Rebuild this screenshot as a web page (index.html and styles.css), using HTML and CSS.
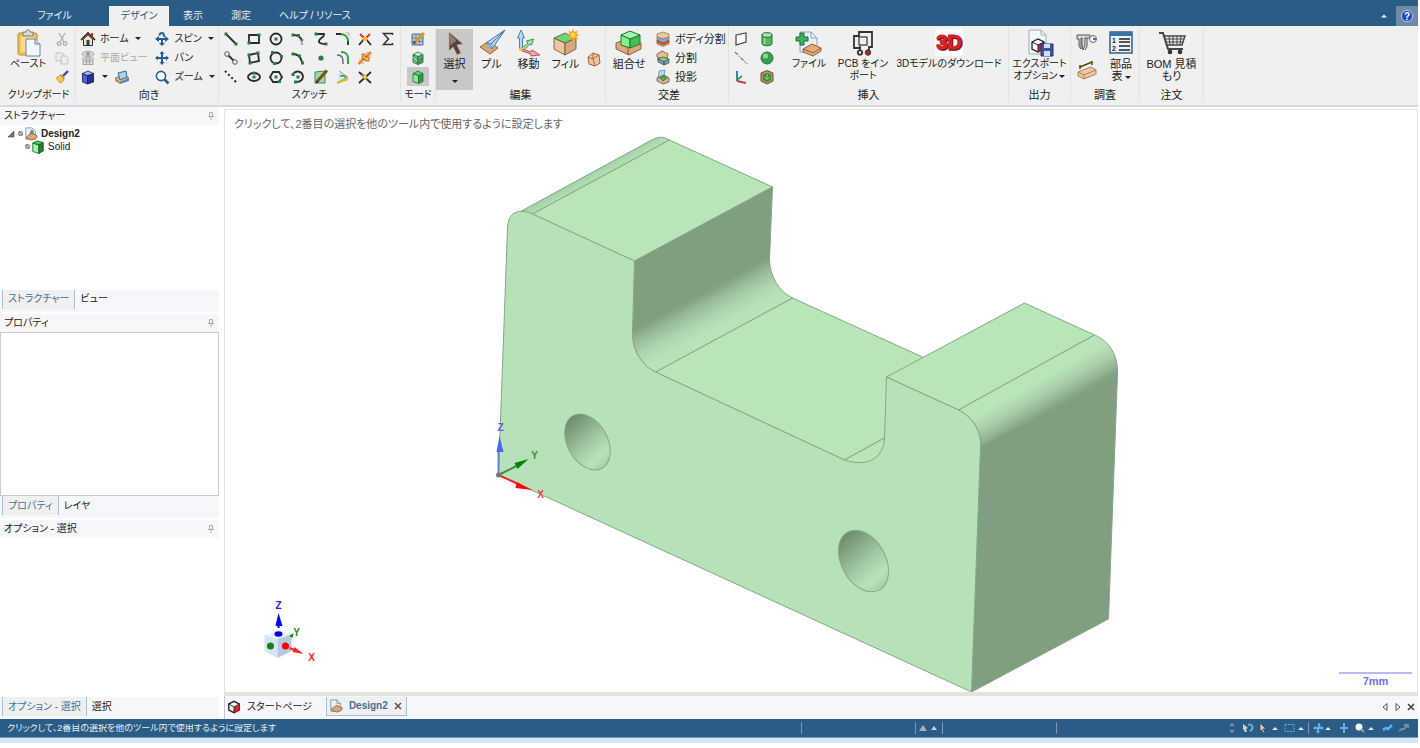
FILE: index.html
```
<!DOCTYPE html>
<html lang="ja">
<head>
    <meta charset="UTF-8">
    <meta name="viewport" content="width=device-width, initial-scale=1.0">
    <title>Design2</title>
    <link rel="stylesheet" href="styles.css">
</head>
<body>
<div class="app">

    <!-- Menu tabs -->
    <header class="menubar">
        <nav class="menu-tabs">
            <button class="menu-tab file-tab">ファイル</button>
            <button class="menu-tab active">デザイン</button>
            <button class="menu-tab">表示</button>
            <button class="menu-tab">測定</button>
            <button class="menu-tab">ヘルプ / リソース</button>
        </nav>
        <button class="collapse-btn" aria-label="リボンを折りたたむ"><svg width="8" height="6" viewBox="0 0 8 6"><path d="M1 4.500 4 1.500l3 3z" fill="#e6eef5"/></svg></button>
        <button class="help-btn" aria-label="ヘルプ"><svg width="14" height="14" viewBox="0 0 14 14"><circle cx="7" cy="7" r="5.600" fill="#2347b8" stroke="#b9c8ea"/><text x="7" y="10.500" text-anchor="middle" font-size="10" font-weight="bold" fill="#fff">?</text></svg></button>
    </header>

    <!-- Ribbon -->
    <div class="ribbon">
        <section class="group g-clipboard">
            <div class="group-body">
                <button class="big">
                    <svg width="28" height="28" viewBox="0 0 28 28"><rect x="4" y="4" width="19" height="22" rx="2" fill="#efc25c" stroke="#b98a33"/><rect x="7" y="7" width="13" height="16" fill="#f9dc90"/><path d="M9 3h3c0-3 4-3 4 0h3v4H9z" fill="#d9dbd6" stroke="#777b70"/><path d="M12 10h9l5 5v12H12z" fill="#f3f7fd" stroke="#6d829c"/><path d="M21 10v5h5" fill="#cbdcee" stroke="#6d829c"/></svg>
                    <span>ペースト</span>
                </button>
                <div class="stack">
                    <button class="icon-btn" aria-label="切り取り"><svg class="ico" viewBox="0 0 16 16"><g fill="none" stroke="#b4b4b4" stroke-width="1.4"><path d="M5 2l5 9M11 2L6 11"/><circle cx="5" cy="12.500" r="1.800"/><circle cx="11" cy="12.500" r="1.800"/></g></svg></button>
                    <button class="icon-btn" aria-label="コピー"><svg class="ico" viewBox="0 0 16 16"><g fill="#ececec" stroke="#c2c2c2"><path d="M2 3h6l2 2v6H2z"/><path d="M7 6h5l2 2v6H7z"/></g></svg></button>
                    <button class="icon-btn" aria-label="書式コピー"><svg class="ico" viewBox="0 0 16 16"><path d="M14 2 9 7" stroke="#4a3fa0" stroke-width="2.4"/><path d="M7 5l4 4-1 1-4-4z" fill="#999"/><path d="M6 6l4 4c-1 3-2 4-4 4L2 9c1-1 3-1 4-3z" fill="#f1cb45" stroke="#a77d1c" stroke-width=".6"/></svg></button>
                </div>
            </div>
            <h2 class="kana">クリップボード</h2>
        </section>

        <section class="group g-orient">
            <div class="group-body">
                <div class="stack">
                    <button class="row-btn"><svg class="ico" viewBox="0 0 16 16"><path d="M3.500 8v6.500h9V8L8 4z" fill="#f3e7b8" stroke="#333"/><path d="M1 9 8 2l7 7" fill="none" stroke="#3b1c1c" stroke-width="1.600"/><path d="M11 2h2v4l-2-2z" fill="#a33"/><rect x="6.500" y="9" width="3" height="5.500" fill="#25407a"/></svg>ホーム<i class="caret"></i></button>
                    <button class="row-btn" disabled><svg class="ico" viewBox="0 0 16 16"><g fill="#ddd" stroke="#a5a5a5"><ellipse cx="8" cy="4" rx="6" ry="2.600"/><circle cx="8" cy="4" r="1.600" fill="#999"/><rect x="3" y="8" width="10" height="6.500"/><path d="M3 11h10M6.500 8v6.500M9.500 8v6.500"/></g></svg>平面ビュー</button>
                    <div class="pair">
                        <button class="row-btn" aria-label="ビュー"><svg class="ico" viewBox="0 0 16 16"><g stroke="#171763" stroke-width=".8"><path d="M2.500 4.500 7.500 6.500v8.500L2.500 13z" fill="#5561bd"/><path d="M7.500 6.500 13.500 4.500V13L7.500 15z" fill="#262f93"/><path d="M2.500 4.500 8 2l5.500 2.500-6 2z" fill="#a9b2ea"/></g></svg><i class="caret"></i></button>
                        <button class="icon-btn" aria-label="スナップビュー"><svg class="ico" viewBox="0 0 16 16"><path d="M1 9l9-3 5 3-9 5z" fill="#e2b583" stroke="#7a5b3b" stroke-width=".7"/><path d="M1 9v3l5 3v-2z" fill="#b98a5c"/><path d="M4 4l8-2 1 6-7 3z" fill="#a8d1ec" stroke="#34678e"/><path d="M6 13l9-4v3l-9 3z" fill="#5688b3"/></svg></button>
                    </div>
                </div>
                <div class="stack">
                    <button class="row-btn"><svg class="ico" viewBox="0 0 16 16"><g fill="#255f90"><path d="M1 8l4-3v2h6V5l4 3-4 3V9H5v2z"/><path d="M8 1c3 0 3 3 3 5H9c0-2 0-3-1-3S6.500 4 6 5L4.500 4C5 2 6 1 8 1z"/><path d="M7 9h2v3h2l-3 3-3-3h2z"/></g></svg>スピン<i class="caret"></i></button>
                    <button class="row-btn"><svg class="ico" viewBox="0 0 16 16"><path d="M8 1l2.500 3H9v3h3V5.500L15 8l-3 2.500V9H9v3h1.500L8 15l-2.500-3H7V9H4v1.500L1 8l3-2.500V7h3V4H5.500z" fill="#255f90"/></svg>パン</button>
                    <button class="row-btn"><svg class="ico" viewBox="0 0 16 16"><circle cx="7" cy="7" r="4.600" fill="#fafdff" stroke="#255f90" stroke-width="1.600"/><path d="M10.500 10.500 14.500 14.500" stroke="#255f90" stroke-width="2.600"/></svg>ズーム<i class="caret"></i></button>
                </div>
            </div>
            <h2>向き</h2>
        </section>

        <section class="group g-sketch">
            <div class="group-body sketch-grid">
                <button class="icon-btn" aria-label="線"><svg class="ico" viewBox="0 0 16 16"><path class="ln" d="M3 3l10 10"/><path class="pt" d="M1.500 1.500h3v3h-3zM11.500 11.500h3v3h-3z"/></svg></button>
                <button class="icon-btn" aria-label="長方形"><svg class="ico" viewBox="0 0 16 16"><path class="ln" d="M3 4h10v8H3z"/><path class="pt" d="M1.500 10.500h3v3h-3zM11.500 2.500h3v3h-3z"/></svg></button>
                <button class="icon-btn" aria-label="円"><svg class="ico" viewBox="0 0 16 16"><circle class="ln" cx="8" cy="8" r="5.500"/><path class="pt" d="M6.500 6.500h3v3h-3z"/></svg></button>
                <button class="icon-btn" aria-label="接線円弧"><svg class="ico" viewBox="0 0 16 16"><path class="ln" d="M3 4c5 0 8 2 9 6"/><path class="pt" d="M1.500 2.500h3v3h-3zM7 3h3v3H7z"/><path d="M10 8l3 6M13.500 8l-2.500 6" stroke="#999"/></svg></button>
                <button class="icon-btn" aria-label="スプライン"><svg class="ico" viewBox="0 0 16 16"><path class="ln" d="M3 3h8c1 4-6 4-5 8 1 2 4 2 7 2"/><path class="pt" d="M1.500 1.500h3v3h-3zM11.500 11.500h3v3h-3z"/></svg></button>
                <button class="icon-btn" aria-label="丸み"><svg class="ico" viewBox="0 0 16 16"><path d="M5 3c5 0 8 3 8 7" fill="none" stroke="#27a338" stroke-width="2"/><path class="ln" d="M1 3h5M13 10v4"/><path d="M11 2h3v3" fill="none" stroke="#d99"/></svg></button>
                <button class="icon-btn" aria-label="トリム"><svg class="ico" viewBox="0 0 16 16"><path class="ln" d="M2 14l6-7 6 7"/><path d="M3 3l5 5 5-5" fill="none" stroke="#d83a23" stroke-width="2"/><path d="M6 6h4v4H6z" fill="#f4b72d"/></svg></button>
                <button class="icon-btn" aria-label="数式"><svg class="ico" viewBox="0 0 16 16"><path d="M12.500 4V2.500H3.500L8.500 8l-5 5.500h9V12" fill="none" stroke="#333" stroke-width="1.500"/></svg></button>

                <button class="icon-btn" aria-label="接線"><svg class="ico" viewBox="0 0 16 16"><path class="ln" d="M4 4l8 8"/><circle cx="4" cy="4" r="2.300" fill="#eee" stroke="#555"/><circle cx="12" cy="12" r="2.300" fill="#eee" stroke="#555"/></svg></button>
                <button class="icon-btn" aria-label="3点長方形"><svg class="ico" viewBox="0 0 16 16"><path class="ln" d="M3 5l9-2 1 8-9 2z"/><path class="pt" d="M1.500 3.500h3v3h-3zM10.500 1.500h3v3h-3zM2.500 11.500h3v3h-3z"/></svg></button>
                <button class="icon-btn" aria-label="3点円"><svg class="ico" viewBox="0 0 16 16"><circle class="ln" cx="8" cy="8" r="5.500"/><path class="pt" d="M3 1h3v3H3zM12 5h3v3h-3zM5 12h3v3H5z"/></svg></button>
                <button class="icon-btn" aria-label="円弧"><svg class="ico" viewBox="0 0 16 16"><path class="ln" d="M3 4c5 0 8 4 9 8"/><path class="pt" d="M1.500 2.500h3v3h-3zM8 4.500h3v3H8zM11 11.500h3v3h-3z"/></svg></button>
                <button class="icon-btn" aria-label="点"><svg class="ico" viewBox="0 0 16 16"><circle cx="8" cy="8" r="2.600" fill="#287f42"/></svg></button>
                <button class="icon-btn" aria-label="オフセット"><svg class="ico" viewBox="0 0 16 16"><path d="M6 2c5 0 7 3 7 6v6" fill="none" stroke="#2ba63d" stroke-width="2"/><path d="M2 5c5 0 6 2 6 9" fill="none" stroke="#666" stroke-width="1.400"/></svg></button>
                <button class="icon-btn" aria-label="分割線"><svg class="ico" viewBox="0 0 16 16"><path d="M1.500 14 14 2" stroke="#df7927" stroke-width="2"/><path d="M5 4h3v3h4v4H8V9H5z" fill="#f4c52d" stroke="#bd442b" stroke-width=".8"/><path d="M3 9v4h4M9 3h4v4" fill="none" stroke="#e89040"/></svg></button>
                <span></span>

                <button class="icon-btn" aria-label="補助線"><svg class="ico" viewBox="0 0 16 16"><path d="M2 2l12 12" stroke="#222" stroke-width="2" stroke-dasharray="2 2.500"/></svg></button>
                <button class="icon-btn" aria-label="楕円"><svg class="ico" viewBox="0 0 16 16"><ellipse class="ln" cx="8" cy="8" rx="6" ry="4"/><path class="pt" d="M6.500 6.500h3v3h-3zM7 2.500h2v3H7z"/></svg></button>
                <button class="icon-btn" aria-label="多角形"><svg class="ico" viewBox="0 0 16 16"><path class="ln" d="M5 3h6l3 5-3 5H5L2 8z"/><path class="pt" d="M6.500 6.500h3v3h-3zM10 11h3v3h-3z"/></svg></button>
                <button class="icon-btn" aria-label="スイープ円弧"><svg class="ico" viewBox="0 0 16 16"><path class="ln" d="M3 5c3-4 9-3 10 2 0 4-3 6-7 6"/><path class="pt" d="M1.500 4h3v3h-3zM6.500 6.500h3v3h-3zM4 11.500h3v3H4z"/></svg></button>
                <button class="icon-btn" aria-label="スケッチ編集"><svg class="ico" viewBox="0 0 16 16"><path d="M2 3l10-1v12H2z" fill="#a5d7aa" stroke="#438a50"/><path d="M14 1.500 4.500 12" stroke="#745423" stroke-width="3"/><path d="M2.500 14.500l1-3.500 2.500 2z" fill="#222"/></svg></button>
                <button class="icon-btn" aria-label="投影"><svg class="ico" viewBox="0 0 16 16"><path d="M4 2l9 6-10 5" fill="#dce8f2" stroke="#999"/><path d="M5 7c3-1 5 0 6 2" fill="none" stroke="#2ba63d" stroke-width="1.600"/><path d="M2 14l11-4" stroke="#e0b820" stroke-width="2"/></svg></button>
                <button class="icon-btn" aria-label="コーナー"><svg class="ico" viewBox="0 0 16 16"><path class="ln" d="M2 14 14 3M2 3l12 11"/><path d="M5 5l5 5" stroke="#e86a22" stroke-width="2.400"/><path d="M6.500 6.500h3v3h-3z" fill="#ee3"/></svg></button>
            </div>
            <h2 class="kana">スケッチ</h2>
        </section>

        <section class="group g-mode">
            <div class="group-body stack">
                <button class="icon-btn" aria-label="スケッチモード"><svg class="ico" viewBox="0 0 16 16"><path d="M2 3h11v11H2z" fill="#bac9df" stroke="#56698a"/><path d="M2 7h11M2 10.500h11M6 3v11M9.500 3v11" stroke="#56698a" stroke-width=".7"/><path d="M14 2 5 11" stroke="#cf9d2a" stroke-width="3"/><path d="M3 13l1-3 2 2z" fill="#222"/></svg></button>
                <button class="icon-btn" aria-label="断面モード"><svg class="ico" viewBox="0 0 16 16"><g stroke="#246b35" stroke-width=".8"><path d="M3 4.500 8 6.500v8l-5-2z" fill="#8fd39b"/><path d="M8 6.500 13 4.500v8l-5 2z" fill="#56a866"/><path d="M3 4.500 8 2l5 2.500-5 2z" fill="#c6efcb"/><path d="M3 9l5 5M3 5l5 5M9 13l4-6"/></g></svg></button>
                <button class="icon-btn pressed" aria-label="3Dモード"><svg class="ico" viewBox="0 0 16 16"><g stroke="#1d6e30" stroke-width=".8"><path d="M3 4.500 8.500 6.500v8L3 12.500z" fill="#8be79a"/><path d="M8.500 6.500 13 4.500v8l-4.500 2z" fill="#2d9b46"/><path d="M3 4.500 8 2l5 2.500-4.500 2z" fill="#5ed175"/></g></svg></button>
            </div>
            <h2 class="kana">モード</h2>
        </section>

        <section class="group g-edit">
            <div class="group-body">
                <button class="big pressed">
                    <svg width="28" height="28" viewBox="0 0 28 28"><path d="M8 3l14 12-6 1 4 8-4 2-4-8-4 4z" fill="#51443e" stroke="#d4aa8f" stroke-width=".8"/><path d="M8.500 4.500l7 7-6 5z" fill="#8b7c74"/></svg>
                    <span>選択</span><i class="caret"></i>
                </button>
                <button class="big">
                    <svg width="28" height="28" viewBox="0 0 28 28"><path d="M2 18l9-6 9 7-8 6z" fill="#dda66c" stroke="#93653a"/><path d="M27 1 8 14l5 1 1 5z" fill="#b7d7f1" stroke="#4677a5"/><path d="M27 1 13 15" stroke="#4677a5"/><path d="M12 15l-4 4 4 1 3-3z" fill="#7fb4e2"/></svg>
                    <span>プル</span>
                </button>
                <button class="big">
                    <svg width="28" height="28" viewBox="0 0 28 28"><path d="M6 1l3.500 8H7.500v11h-3V9H2.500z" fill="#b9d9ef" stroke="#4d81a8"/><path d="M7 19l6-5-1.500-2 7-2-2 6-1.500-1-6 6z" fill="#a9e3b2" stroke="#3b9150"/><path d="M7 20l9 3 1-2 8 5-9 1v-2l-9-3z" fill="#efaaaa" stroke="#bd5252"/><circle cx="6" cy="20" r="2" fill="#e3c44c"/></svg>
                    <span>移動</span>
                </button>
                <button class="big">
                    <svg width="28" height="28" viewBox="0 0 28 28"><g stroke="#6b4d32" stroke-width=".8"><path d="M2 9l11 5v12L2 20z" fill="#f0c59c"/><path d="M13 14 24 9v11l-11 6z" fill="#d9a878"/><path d="M2 9l11-5 11 5-11 5z" fill="#66d878"/></g><path d="M21 0l1.500 3 3-1.500L24.500 5l3 1-3 1.500 1 3.500-3-1.500L21 12.500 19.500 9.500l-3 1.500 1-3.500-3-1.500 3-1-1-3.500 3 1.500z" fill="#f3a51c"/><circle cx="21" cy="6" r="2.500" fill="#ffd44d"/></svg>
                    <span>フィル</span>
                </button>
                <button class="icon-btn combine" aria-label="ブレンド"><svg class="ico" viewBox="0 0 16 16"><path d="M2 6l5-4 6 2 1 8-5 3-6-2z" fill="#f0c39d" stroke="#98683f"/><path d="M2 6l5 2 6-4M7 8l2 7M7 2v6" fill="none" stroke="#98683f" stroke-width=".9"/></svg></button>
            </div>
            <h2>編集</h2>
        </section>

        <section class="group g-cross">
            <div class="group-body">
                <button class="big">
                    <svg width="28" height="28" viewBox="0 0 28 28"><g stroke="#6b4d32" stroke-width=".8"><path d="M1 14l8-3 17 3v6l-12 6L1 20z" fill="#dca77a"/><path d="M13 18v8"/></g><g stroke="#22762e"><path d="M6 6l9 4v9l-9-3z" fill="#84ed92"/><path d="M15 10l10-4v9l-10 4z" fill="#46bc59"/><path d="M6 6l9-4 10 4-10 4z" fill="#a0f4ab"/></g></svg>
                    <span>組合せ</span>
                </button>
                <div class="stack">
                    <button class="row-btn"><svg class="ico" viewBox="0 0 16 16"><g stroke="#8a5a35" stroke-width=".6"><path d="M2 9l6 2 6-2v4l-6 2.500L2 13z" fill="#e4ae7f"/><path d="M2 9l6 2 6-2v2.500L8 14l-6-2.500z" fill="#d84b3f"/><path d="M2 6l6 2 6-2v3l-6 2.500L2 9z" fill="#79b2dc"/><path d="M2 3l6-2 6 2v3L8 8 2 6z" fill="#eac6a4"/></g></svg>ボディ分割</button>
                    <button class="row-btn"><svg class="ico" viewBox="0 0 16 16"><g stroke="#4f4636" stroke-width=".7"><path d="M2 4l5-3 6 3-1 4-5 1-5-2z" fill="#e8bd8c"/><path d="M2 9l6-2 6 2-5 3z" fill="#7fcc8b"/><path d="M3 9l6 3v3l-6-3zM9 12l5-3v4l-5 2z" fill="#79a4c4"/></g></svg>分割</button>
                    <button class="row-btn"><svg class="ico" viewBox="0 0 16 16"><path d="M4 2l6-1-1 7-6 3z" fill="#b6d9ec" stroke="#5387a5" stroke-width=".7"/><path d="M2 9l7-3 5 3v4l-6 2-6-3z" fill="#dbb391" stroke="#4f4636" stroke-width=".7"/><path d="M5 9l4-2 3 2-4 3z" fill="#48b75d" stroke="#285e35" stroke-width=".7"/></svg>投影</button>
                </div>
            </div>
            <h2>交差</h2>
        </section>

        <section class="group g-insert">
            <div class="group-body">
                <div class="create-grid">
                    <button class="icon-btn" aria-label="平面"><svg class="ico" viewBox="0 0 16 16"><path d="M3 4l10-2v9L3 14z" fill="#fafafa" stroke="#444" stroke-width="1.200"/></svg></button>
                    <button class="icon-btn" aria-label="円柱"><svg class="ico" viewBox="0 0 16 16"><path d="M3 4v8.500c0 3 10 3 10 0V4z" fill="#50b664" stroke="#286a37"/><ellipse cx="8" cy="4" rx="5" ry="2.300" fill="#a5e6b0" stroke="#286a37"/><path d="M5.500 7v6" stroke="#9de0a9" stroke-width="1.500"/></svg></button>
                    <button class="icon-btn" aria-label="軸"><svg class="ico" viewBox="0 0 16 16"><path d="M2 2l12 12" stroke="#777" stroke-width="1.300" stroke-dasharray="4 1.500 1 1.500"/></svg></button>
                    <button class="icon-btn" aria-label="球"><svg class="ico" viewBox="0 0 16 16"><circle cx="8" cy="8" r="6" fill="#3b9d50" stroke="#28743a"/><circle cx="6.500" cy="6" r="2.500" fill="#8bd69a"/></svg></button>
                    <button class="icon-btn" aria-label="原点"><svg class="ico" viewBox="0 0 16 16"><path d="M4 2v10" stroke="#3d83b0" stroke-width="2"/><path d="M4 11l5-4" stroke="#3a9f52" stroke-width="1.800"/><path d="M4 12l9 2" stroke="#c43f3f" stroke-width="1.800"/></svg></button>
                    <button class="icon-btn" aria-label="シェル"><svg class="ico" viewBox="0 0 16 16"><path d="M2 4l6-2.500L14 4v8l-6 3-6-3z" fill="#c4915b" stroke="#6b4d32"/><path d="M4 5l4-1 4 1v6l-4 2-4-2z" fill="#358f3e"/><path d="M8 5v5M5.500 8 8 10.500 10.500 8" fill="none" stroke="#8fe07a"/></svg></button>
                </div>
                <button class="big">
                    <svg width="28" height="28" viewBox="0 0 28 28"><path d="M5 3h11l6 6v14H5z" fill="#e6eef6" stroke="#93a5b5"/><path d="M16 3v6h6" fill="none" stroke="#93a5b5"/><path d="M5 4h4v4h4v4H9v4H5v-4H1V8h4z" fill="#43ad60" stroke="#1f6f38"/><path d="M8 20l9-5 9 4v3l-8 5-10-4z" fill="#e2ab78" stroke="#8e6135"/><path d="M8 20l10 4 8-5" fill="none" stroke="#8e6135"/></svg>
                    <span>ファイル</span>
                </button>
                <button class="big pcb">
                    <svg width="28" height="28" viewBox="0 0 28 28"><g fill="none" stroke="#333" stroke-width="1.800"><path d="M11 19H5V7h5V3h13v15h-3v3M11 17v4"/><rect x="10" y="8" width="8" height="8" stroke-width="1.200"/><circle cx="11" cy="23.500" r="2.200"/></g><circle cx="19" cy="23.500" r="2.700" fill="#b8222a" stroke="#333"/></svg>
                    <span>PCB をイン<br>ポート</span>
                </button>
                <button class="big model3d">
                    <svg width="28" height="28" viewBox="0 0 28 28"><rect width="28" height="27" rx="4" fill="#fcfcfc"/><g font-size="20" font-weight="bold" text-anchor="middle"><text x="15" y="21" fill="#6b0e12" stroke="#6b0e12" stroke-width="1.500">3D</text><text x="14" y="20" fill="#d2232a" stroke="#d2232a">3D</text></g></svg>
                    <span>3Dモデルのダウンロード</span>
                </button>
            </div>
            <h2>挿入</h2>
        </section>

        <section class="group g-export">
            <div class="group-body">
                <button class="big">
                    <svg width="28" height="28" viewBox="0 0 28 28"><path d="M3 1h12l5 5v19H3z" fill="#f3f7fb" stroke="#9aacbd"/><path d="M15 1v5h5" fill="none" stroke="#9aacbd"/><path d="M6 13l6-3 6 3v7l-6 3-6-3z" fill="#fff" stroke="#222" stroke-width="1.300"/><path d="M12 16l6-3v7l-6 3z" fill="#d4202a"/><path d="M6 13l6 3 6-3M12 16v7" fill="none" stroke="#222"/><path d="M15 15h12v12H15z" fill="#42549f" stroke="#25326e"/><path d="M18 15h6v4h-6zM18 22h6v5h-6z" fill="#d7def0"/></svg>
                    <span>エクスポート<br>オプション<i class="caret"></i></span>
                </button>
            </div>
            <h2>出力</h2>
        </section>

        <section class="group g-survey">
            <div class="group-body">
                <div class="survey-col">
                    <button class="icon-btn" aria-label="測定"><svg width="22" height="22" viewBox="0 0 22 22"><path d="M1 3h13v3H9v7l-2 5-1-5V6H5v11l-2-3V7H1zM11 6v8l-2 4" fill="#d9d9d9" stroke="#555"/><circle cx="17" cy="7" r="3.500" fill="#edf3ff" stroke="#666"/><path d="M17 7h3" stroke="#4366d8" stroke-width="2"/></svg></button>
                    <button class="icon-btn" aria-label="質量特性"><svg width="22" height="22" viewBox="0 0 22 22"><path d="M2 13l13-5 5 3v4L8 20l-6-3z" fill="#efc7a4" stroke="#ac8059"/><path d="M2 13l6 3 12-5M8 16v4" fill="none" stroke="#ac8059"/><path d="M4 8l12-5M4 6v4M16 2v4" stroke="#584516" stroke-width="1.500"/></svg></button>
                </div>
                <button class="big">
                    <svg width="28" height="28" viewBox="0 0 28 28"><rect x="3" y="3" width="22" height="21" fill="#edf3f8" stroke="#335f8a" stroke-width="1.500"/><path d="M3 3h22v4H3z" fill="#3a72a8"/><path d="M12 10h11M12 13h11M12 17h11M12 21h11" stroke="#222" stroke-width="1.500"/><g font-size="7" font-weight="bold" fill="#222"><text x="5" y="14">1</text><text x="5" y="22">2</text></g></svg>
                    <span>部品<br>表<i class="caret"></i></span>
                </button>
            </div>
            <h2>調査</h2>
        </section>

        <section class="group g-order">
            <div class="group-body">
                <button class="big">
                    <svg width="28" height="28" viewBox="0 0 28 28"><g fill="none" stroke="#444"><path d="M1 4h4l5 16h15" stroke-width="2"/><path d="M6 7h21l-3 9H9" stroke-width="1.400"/><path d="M7 10h19M8 13h17M11 7l1 9M15 7v9M19 7v9M23 7l-1 9"/></g><circle cx="12" cy="23" r="2.300" fill="#333"/><circle cx="22" cy="23" r="2.300" fill="#333"/></svg>
                    <span>BOM 見積<br>もり</span>
                </button>
            </div>
            <h2>注文</h2>
        </section>
    </div>

    <!-- Workspace -->
    <div class="workspace">
        <aside class="side">
            <section class="panel">
                <div class="panel-head"><h3>ストラクチャー</h3><button class="pin" aria-label="固定"><svg width="8" height="8" viewBox="0 0 8 8"><path d="M2.500 .5h3v4h-3zM1 4.500h6M4 4.500V8" fill="none" stroke="#aaa"/></svg></button></div>
                <div class="panel-body tree">
                    <div class="node root">
                        <svg width="8" height="8" viewBox="0 0 8 8"><path d="M7 1v6H1z" fill="#777" stroke="#444" stroke-width=".6"/></svg>
                        <input type="checkbox" id="n-design" checked>
                        <label for="n-design"><svg width="14" height="14" viewBox="0 0 16 16"><path d="M2 1h7l4 4v9H2z" fill="#eaf0f6" stroke="#8296a9"/><path d="M8 3l3 1v5H6z" fill="#5f88ad"/><path d="M3 11l6-4 6 3v2l-6 3-6-2z" fill="#dfa76e" stroke="#815a35" stroke-width=".8"/></svg>Design2</label>
                    </div>
                    <div class="node child">
                        <input type="checkbox" id="n-solid" checked>
                        <label for="n-solid"><svg width="14" height="14" viewBox="0 0 16 16"><g stroke="#14561f" stroke-width=".9"><path d="M2 3.500 9 5.500v10L2 13z" fill="#a0f5a8"/><path d="M9 5.500 14 3v9.500l-5 3z" fill="#237f35"/><path d="M2 3.500 7 1l7 2-5 2.500z" fill="#46c45d"/></g></svg>Solid</label>
                    </div>
                </div>
                <div class="panel-tabs"><button class="active">ストラクチャー</button><button>ビュー</button></div>
            </section>
            <section class="panel">
                <div class="panel-head"><h3>プロパティ</h3><button class="pin" aria-label="固定"><svg width="8" height="8" viewBox="0 0 8 8"><path d="M2.500 .5h3v4h-3zM1 4.500h6M4 4.500V8" fill="none" stroke="#aaa"/></svg></button></div>
                <div class="panel-body boxed"></div>
                <div class="panel-tabs"><button class="active">プロパティ</button><button>レイヤ</button></div>
            </section>
            <section class="panel options">
                <div class="panel-head"><h3>オプション - 選択</h3><button class="pin" aria-label="固定"><svg width="8" height="8" viewBox="0 0 8 8"><path d="M2.500 .5h3v4h-3zM1 4.500h6M4 4.500V8" fill="none" stroke="#aaa"/></svg></button></div>
                <div class="panel-body"></div>
                <div class="panel-tabs"><button class="active">オプション - 選択</button><button>選択</button></div>
            </section>
        </aside>

        <main class="document">
            <div class="viewport">
                <p class="hint">クリックして、2番目の選択を他のツール内で使用するように設定します</p>
                <svg class="model" viewBox="225 110 1191 582">
                    <defs>
                        <linearGradient id="fillet" gradientUnits="userSpaceOnUse" x1="700" y1="295" x2="722" y2="336"><stop offset="0" stop-color="#819e81"/><stop offset=".2" stop-color="#98b899"/><stop offset=".5" stop-color="#add3af"/><stop offset=".8" stop-color="#b8e3ba"/></linearGradient>
                        <linearGradient id="round" gradientUnits="userSpaceOnUse" x1="1026" y1="372" x2="1048" y2="411"><stop offset=".3" stop-color="#b9e5bb"/><stop offset=".6" stop-color="#accfad"/><stop offset=".85" stop-color="#95b496"/><stop offset="1" stop-color="#829f82"/></linearGradient>
                        <linearGradient id="backround" gradientUnits="userSpaceOnUse" x1="590" y1="174" x2="595" y2="183"><stop offset="0" stop-color="#a5d2a8"/><stop offset="1" stop-color="#b9e5bb"/></linearGradient>
                        <linearGradient id="bore" x1="0" y1=".5" x2="1" y2=".35"><stop offset="0" stop-color="#6e8a6f"/><stop offset=".5" stop-color="#a1c6a3"/><stop offset=".8" stop-color="#b9e3bb"/><stop offset="1" stop-color="#a5cca7"/></linearGradient>
                    </defs>
                    <g class="edges">
                        <path fill="url(#backround)" d="M519 212 653 139Q661 135 669 140L532 214z"/>
                        <path class="top" d="M532 214 669 140 772 187 634 261z"/>
                        <path class="shade" d="M634 261 772 187 769 259 632 332z"/>
                        <path class="top" d="M655 372 792 298 922 357 960 400 884 438 844 460z"/>
                        <path fill="url(#fillet)" d="M632 332 769 259C769 276 779 292 792 298L655 372C642 366 631 350 632 332z"/>
                        <path class="top" d="M844 460 884 438 900 470 858 470z"/>
                        <path class="top" d="M886 377 1024 303 1094 335 958 410z"/>
                        <path fill="url(#round)" d="M958 410 1094 335C1109 341 1118 356 1117 374L980 447C981 431 972 417 958 410z"/>
                        <path class="shade" d="M980 447 1117 374 1108 619 971 692z"/>
                        <path class="front" d="M498 475 507 229C507 214 516 207 532 214L634 261 632 332C631 350 642 366 655 372L844 460C865 467 883 460 884 438L886 377 958 410C972 417 981 431 980 447L971 692z"/>
                    </g>
                    <g stroke="#83a885" fill="url(#bore)">
                        <ellipse cx="587" cy="442" rx="30" ry="20" transform="rotate(61 587 442)"/>
                        <ellipse cx="863" cy="561" rx="33" ry="22" transform="rotate(61 863 561)"/>
                    </g>
                    <!-- Origin axes -->
                    <g class="axis-text">
                        <path d="M498 475V448" stroke="#6289cf" stroke-width="2"/><path d="M499 436l4 16h-7z" fill="#4a66ee"/>
                        <path d="M498 475l20-10" stroke="#3b8d3f" stroke-width="2"/><path d="M528 459l-14 4 3 6z" fill="#078309"/>
                        <path d="M498 475l22 10" stroke="#f02020" stroke-width="2"/><path d="M532 490l-16-8-1 6z" fill="#f00"/>
                        <circle cx="498" cy="475" r="2.500" fill="#777"/>
                        <text x="500" y="431" fill="#5468e4">Z</text><text x="534" y="459" fill="#359040">Y</text><text x="540" y="498" fill="#f04040">X</text>
                    </g>
                    <!-- View orientation cube -->
                    <g class="axis-text">
                        <path d="M264 635l13-5 14 4-14 5z" fill="#eaf3fc"/><path d="M264 635l13 4v19l-13-7z" fill="#d5e4f5"/><path d="M277 639l14-5v17l-14 7z" fill="#b5c9e3"/>
                        <path d="M278 628v-7" stroke="#00f" stroke-width="2"/><path d="M278 613l4 13h-7z" fill="#00f"/><ellipse cx="278" cy="634" rx="4" ry="2.800" fill="#0000d8"/>
                        <circle cx="270" cy="646" r="3.500" fill="#0a8713"/><circle cx="285" cy="646" r="3.500" fill="#f00"/>
                        <path d="M289 648l5 2" stroke="#f22" stroke-width="2"/><path d="M303 654l-9-7-2 5z" fill="#f22"/>
                        <path d="M289 636l4-3-1 5z" fill="#078309"/>
                        <text x="278" y="609" fill="#22f">Z</text><text x="296" y="636" fill="#168c1b">Y</text><text x="311" y="661" fill="#f22">X</text>
                    </g>
                </svg>
                <div class="scale">7mm</div>
            </div>
            <div class="doc-tabs">
                <button class="doc-tab"><svg width="14" height="14" viewBox="0 0 16 16"><path d="M2 4.500 8 1.500l6 3v7l-6 3-6-3z" fill="#eee" stroke="#222" stroke-width="1.500"/><path d="M8 8l6-3v6.500l-6 3z" fill="#d8212a"/><path d="M2 4.500 8 8l6-3.500M8 8v6.500" fill="none" stroke="#222"/></svg>スタートページ</button>
                <button class="doc-tab active"><svg width="14" height="14" viewBox="0 0 16 16"><path d="M2 1h7l4 4v9H2z" fill="#eaf0f6" stroke="#8296a9"/><path d="M9 1v4h4" fill="none" stroke="#8296a9"/><path d="M3 11l6-4 6 3v2l-6 3-6-2z" fill="#dfa76e" stroke="#815a35" stroke-width=".8"/></svg>Design2<svg width="8" height="8" viewBox="0 0 8 8"><path d="M1 1l6 6M7 1 1 7" stroke="#555" stroke-width="1.600"/></svg></button>
                <div class="doc-nav">
                    <button aria-label="前へ"><svg width="8" height="8" viewBox="0 0 8 8"><path d="M6 .5v7L2 4z" fill="none" stroke="#555"/></svg></button>
                    <button aria-label="次へ"><svg width="8" height="8" viewBox="0 0 8 8"><path d="M2 .5v7L6 4z" fill="none" stroke="#555"/></svg></button>
                    <button aria-label="閉じる"><svg width="8" height="8" viewBox="0 0 8 8"><path d="M1 1l6 6M7 1 1 7" stroke="#444" stroke-width="1.600"/></svg></button>
                </div>
            </div>
        </main>
    </div>

    <!-- Status bar -->
    <footer class="statusbar">
        <p class="status-text">クリックして、2番目の選択を他のツール内で使用するように設定します</p>
        <div class="status-cell"></div>
        <div class="status-cell alerts"><svg width="22" height="8" viewBox="0 0 22 8"><path d="M1 7l4-6 4 6z" fill="#a5b3c1"/><path d="M13 6l3-4 3 4z" fill="#c5d3df"/></svg></div>
        <div class="status-cell"></div>
        <div class="status-cell status-tools">
            <svg width="186" height="12" viewBox="0 0 186 12">
                <path d="M4 4l3-3 3 3zM4 8l3 3 3-3z" fill="#7d94aa"/>
                <path d="M18 2l5 4-2 1 1 3-2 0-2-3z" fill="#ccd"/><path d="M23 3c5-2 6 4 2 6" fill="none" stroke="#65a9e6" stroke-width="2"/>
                <path d="M35 1l6 6-3 0 2 3-2 1-1-3-2 1z" fill="#d2cbc5" stroke="#32302f" stroke-width=".6"/>
                <g fill="#e2e8ee"><path d="M47 8l3-3 3 3zM73 8l3-3 3 3zM100 8l3-3 3 3zM143 8l3-3 3 3z"/></g>
                <rect x="60" y="2.500" width="9" height="7" fill="none" stroke="#69aae2" stroke-dasharray="2 1"/>
                <path d="M83.500 0v12" stroke="#8099af"/>
                <g fill="#69aee8"><path d="M88 6l3-2v1h2V3c-1-1 0-2 1-2s2 2 1 4h1V4l3 2-3 2V7h-2v2h1l-2 3-2-3h1V7h-2v1z"/><path d="M115 5h3V1h2v4h3v2h-3v4h-2V7h-3z"/></g>
                <circle cx="134" cy="5" r="3.500" fill="#fff"/><path d="M136 7l3 3" stroke="#69aee8" stroke-width="2"/>
                <path d="M158 8l3-2 2 1 4-4" fill="none" stroke="#62aeee" stroke-width="2.500"/>
                <path d="M174 9l3-2 2 0 3-4M179 3h4v3" fill="none" stroke="#7890a5" stroke-width="1.800"/>
            </svg>
        </div>
    </footer>
    <div class="taskbar-edge"></div>
</div>
</body>
</html>
```
FILE: styles.css
```
* {
    box-sizing: border-box;
}

body {
    margin: 0;
    background: #fff;
    color: #222;
    font: 10px/14px "Liberation Sans", "Noto Sans CJK JP", sans-serif;
    font-feature-settings: "palt";
}

h2, h3, p {
    margin: 0;
    font-size: 10px;
    font-weight: normal;
}

button {
    margin: 0;
    padding: 0;
    border: 0;
    background: none;
    color: inherit;
    font: inherit;
    font-feature-settings: inherit;
    white-space: nowrap;
    cursor: pointer;
}

svg {
    display: block;
    flex: none;
}

.app {
    display: flex;
    flex-direction: column;
    height: 100vh;
    padding-right: 2px;
}

/* Menu tabs */
.menubar {
    display: flex;
    align-items: flex-end;
    height: 26px;
    background: #2b5c85;
    color: #e8eff5;
}

.menu-tabs {
    display: flex;
    flex: 1;
}

.menu-tab {
    height: 20px;
    padding: 0 14px;
}

.file-tab {
    width: 109px;
}

.menu-tab.active {
    width: 60px;
    padding: 0;
    background: #f0f0f0;
    color: #2b5c85;
}

.collapse-btn {
    display: grid;
    place-items: center;
    width: 16px;
    height: 20px;
}

.help-btn {
    display: grid;
    place-items: center;
    width: 22px;
    height: 20px;
    margin-left: 4px;
    background: #6d8ba6;
}

/* Ribbon */
.ribbon {
    display: flex;
    height: 81px;
    padding-bottom: 3px;
    border-bottom: 2px solid #d3dae4;
    background: #f0f0f0;
}

.group {
    display: flex;
    flex-direction: column;
    flex: none;
    padding-top: 3px;
    border-right: 1px solid #e2e2e2;
}

.group h2 {
    font-size: 11px;
    text-align: center;
}

.group h2.kana {
    font-size: 10px;
}

.group-body {
    display: flex;
    height: 59px;
}

.g-clipboard { width: 76px; padding-left: 8px; }
.g-clipboard h2 { margin-left: -6px; }
.g-orient { width: 143px; padding-left: 4px; }
.g-sketch { width: 182px; }
.g-mode { width: 35px; }
.g-edit { width: 170px; }
.g-cross { width: 123px; padding-left: 4px; }
.g-insert { width: 280px; }
.g-export { width: 62px; }
.g-survey { width: 69px; }
.g-order { width: 64px; }

.g-edit .big,
.g-cross,
.g-survey,
.g-order {
    font-size: 11px;
}

.stack {
    display: flex;
    flex-direction: column;
}

.ico {
    width: 16px;
    height: 16px;
}

.ln {
    fill: none;
    stroke: #2b2b2b;
    stroke-width: 1.8;
}

.pt {
    fill: #2c7a45;
}

.icon-btn {
    display: grid;
    place-items: center;
    height: 19px;
}

.row-btn {
    display: flex;
    align-items: center;
    gap: 4px;
    height: 19px;
}

.row-btn:disabled {
    color: #aaa;
}

.pair {
    display: flex;
    gap: 6px;
}

.caret {
    display: inline-block;
    margin-left: 2px;
    border: 3px solid transparent;
    border-top-color: #222;
    border-bottom: 0;
    vertical-align: middle;
}

.big {
    display: flex;
    flex-direction: column;
    align-items: center;
    flex: none;
    width: 36px;
    line-height: 12px;
}

.big > span {
    padding-top: 1px;
}

.pressed {
    background: #c8c8c8;
}

.big > .caret {
    margin: 10px 0 0;
}

.g-clipboard .big { width: 40px; }
.g-clipboard .icon-btn { width: 28px; }

.g-orient .stack { width: 75px; }
.g-orient .stack + .stack { width: 64px; }

.sketch-grid {
    display: grid;
    grid-template-columns: repeat(8, 1fr);
    grid-auto-rows: 19px;
    padding: 0 1px;
}

.g-mode .icon-btn { width: 22px; }
.g-mode .group-body { padding-left: 6px; }

.g-edit .big { width: 37px; height: 61px; }
.g-edit .combine { width: 20px; height: 59px; }

.g-cross .big { width: 38px; }
.g-cross .stack { padding-left: 7px; }

.create-grid {
    display: grid;
    grid-template-columns: 24px 28px;
    grid-auto-rows: 19px;
}

.g-insert .big { width: 54px; margin-left: 1px; }
.g-insert .pcb { width: 52px; }
.g-insert .model3d { width: 118px; }

.g-export .big { width: 100%; }

.survey-col {
    display: flex;
    flex-direction: column;
    width: 32px;
}

.survey-col .icon-btn { height: 27px; }
.g-order .big { width: 100%; }

/* Side panels */
.workspace {
    display: flex;
    flex: 1;
    min-height: 0;
}

.side {
    display: flex;
    flex-direction: column;
    gap: 2px;
    width: 219px;
    flex: none;
}

.panel {
    display: flex;
    flex-direction: column;
    flex: 1 1 0;
}

.panel.options {
    flex-grow: .97;
}

.panel-head {
    display: flex;
    align-items: center;
    justify-content: space-between;
    height: 18px;
    padding: 0 4px;
    background: #f7f7fb;
}

.panel-body {
    flex: 1;
}

.boxed {
    border: 1px solid #c9c9c9;
}

.panel-tabs {
    display: flex;
    height: 22px;
    padding: 0 2px 3px;
    background: #f7f7fb;
}

.panel-tabs button {
    padding: 0 5px;
}

.panel-tabs .active {
    border: solid #a9bed1;
    border-width: 0 1px;
    background: #f0f0f0;
    color: #41719b;
}

.tree {
    padding-top: 2px;
}

.node {
    display: flex;
    align-items: center;
    height: 13px;
}

.node label {
    display: flex;
    align-items: center;
    gap: 3px;
}

.node input {
    width: 5px;
    height: 5px;
    margin: 0 1px 0 3px;
    accent-color: #888;
}

.root {
    padding-left: 7px;
    font-weight: bold;
}

.child {
    padding-left: 22px;
}

/* Document area */
.document {
    display: flex;
    flex-direction: column;
    flex: 1;
    min-width: 0;
    margin-left: 5px;
}

.viewport {
    position: relative;
    flex: 1;
    min-height: 0;
    margin-top: 2px;
    border: solid #e4e3dd;
    border-width: 1px 1px 4px;
}

.model {
    width: 100%;
    height: 100%;
}

.edges {
    stroke: #83a885;
    stroke-linejoin: round;
}

.top { fill: #b9e5bb; }
.front { fill: #b7e1b8; }
.shade { fill: #819e81; }

.axis-text {
    font-size: 10px;
    font-weight: bold;
    text-anchor: middle;
}

.hint {
    position: absolute;
    top: 7px;
    left: 9px;
    color: #666;
    font-size: 11px;
}

.scale {
    position: absolute;
    right: 5px;
    bottom: 4px;
    width: 73px;
    border-top: 2px solid #b9b9fb;
    color: #6e6ef0;
    font-size: 11px;
    font-weight: bold;
    text-align: center;
}

.doc-tabs {
    display: flex;
    height: 23px;
    padding: 1px 0 3px;
    border-left: 1px solid #c9c9c9;
    background: #f7f7fb;
}

.doc-tab {
    display: flex;
    align-items: center;
    gap: 6px;
    padding: 0 2px;
}

.doc-tab.active {
    margin-left: 12px;
    padding: 0 4px 0 2px;
    border: 1px solid #a9bed1;
    border-top: 0;
    background: #f0f0f0;
    color: #41719b;
    font-weight: bold;
}

.doc-nav {
    display: flex;
    gap: 5px;
    margin-left: auto;
    padding-right: 3px;
}

/* Status bar */
.statusbar {
    display: flex;
    align-items: center;
    height: 19px;
    padding: 0 7px;
    border-bottom: 1px solid #7b9bb6;
    background: #2b5c85;
    color: #e8eff5;
}

.status-text {
    flex: 1;
    height: 8px;
    overflow: hidden;
    font-size: 9px;
    line-height: 8px;
}

.status-cell {
    width: 114px;
    height: 12px;
    border-left: 1px solid #7d9ab2;
}

.status-cell.alerts {
    display: grid;
    place-items: center;
    width: 27px;
}

.status-cell.status-tools {
    display: flex;
    justify-content: flex-end;
    width: 355px;
}

.taskbar-edge {
    height: 10px;
    border-top: 5px solid #d2e7ee;
}
```
